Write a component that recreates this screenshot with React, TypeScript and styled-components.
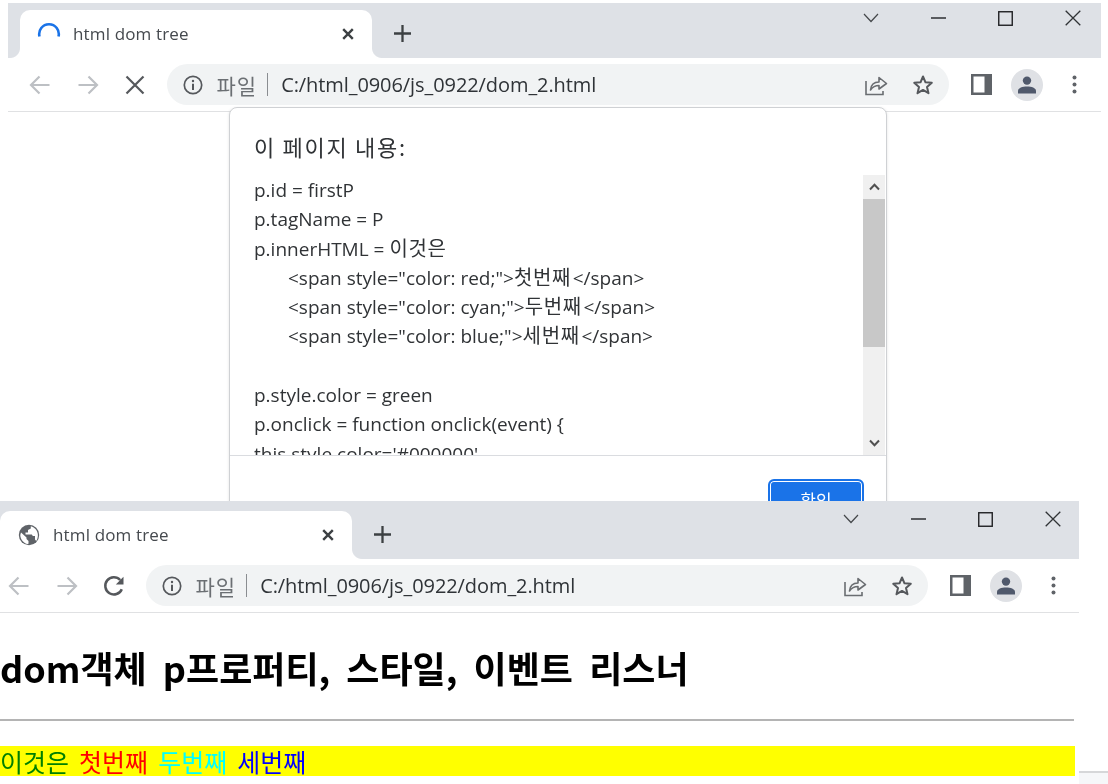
import React from 'react';
import styled, { createGlobalStyle } from 'styled-components';

const UI_FONT = `"Open Sans", "Noto Sans CJK KR", sans-serif`;
const STRIP = '#dee1e6';

const GlobalStyle = createGlobalStyle`
    html, body {
        margin: 0;
        padding: 0;
        background: #fff;
    }
    #root {
        width: 1108px;
        height: 784px;
        overflow: hidden;
    }
`;

const Desktop = styled.div`
    position: relative;
    width: 1108px;
    height: 784px;
    background: #fff;
    overflow: hidden;
    filter: blur(0.35px);
`;

/* the two browser windows are stacked on a free canvas */
const Window = styled.div<{ $left: number; $top: number; $width: number; $height: number }>`
    position: absolute;
    left: ${p => p.$left}px;
    top: ${p => p.$top}px;
    width: ${p => p.$width}px;
    height: ${p => p.$height}px;
    display: flex;
    flex-direction: column;
    background: #fff;
    font-family: ${UI_FONT};
`;

/* corner of a third window peeking out under the second one */
const PeekingWindow = styled.div`
    position: absolute;
    left: 1079px;
    top: 771px;
    width: 29px;
    height: 13px;
    box-sizing: border-box;
    border-top: 2px solid #d6d7d9;
    background: #f6f7f9;
`;

const TabStrip = styled.div<{ $height: number; $tabLeft: number }>`
    height: ${p => p.$height}px;
    flex: none;
    box-sizing: border-box;
    background: ${STRIP};
    display: flex;
    align-items: flex-end;
    padding-left: ${p => p.$tabLeft}px;
`;

const Tab = styled.div`
    position: relative;
    width: 352px;
    height: 48px;
    flex: none;
    box-sizing: border-box;
    background: #fff;
    border-radius: 10px 10px 0 0;
    display: flex;
    align-items: center;
    padding: 0 17px 1px 17px;
    color: #45494e;
    font-size: 17px;

    &::before,
    &::after {
        content: '';
        position: absolute;
        bottom: 0;
        width: 10px;
        height: 10px;
    }
    &::before {
        right: 100%;
        background: radial-gradient(circle at 0 0, ${STRIP} 9.5px, #fff 10.5px);
    }
    &::after {
        left: 100%;
        background: radial-gradient(circle at 100% 0, ${STRIP} 9.5px, #fff 10.5px);
    }
`;

const TabTitle = styled.span`
    flex: 1;
    margin-left: 12px;
    letter-spacing: 0.15px;
`;

const NewTab = styled.div`
    margin: 0 0 5px 22px;
    height: 40px;
    display: flex;
    align-items: center;
`;

const Caption = styled.div<{ $height: number; $right: number }>`
    margin-left: auto;
    align-self: flex-start;
    display: flex;
    align-items: center;
    height: ${p => p.$height}px;
    gap: 52px;
    padding-right: ${p => p.$right}px;
`;

const Toolbar = styled.div<{ $inset: number }>`
    height: 54px;
    flex: none;
    box-sizing: border-box;
    border-bottom: 1px solid #e0e1e3;
    display: flex;
    align-items: center;
    padding-left: ${p => p.$inset}px;
`;

const NavIcons = styled.div`
    display: flex;
    align-items: center;
    gap: 23.5px;
`;

const Omnibox = styled.div`
    margin-left: 19.5px;
    width: 782px;
    height: 41px;
    flex: none;
    box-sizing: border-box;
    border-radius: 21px;
    background: #f1f3f4;
    display: flex;
    align-items: center;
    padding: 0 15px 0 16px;
    font-size: 20px;
    color: #5f6368;
`;

const Scheme = styled.span`
    margin-left: 14px;
    font-size: 21px;
    letter-spacing: 1px;
    font-family: "Noto Sans CJK KR", sans-serif;
    color: #6b6f73;
`;

const Divider = styled.span`
    width: 1px;
    height: 23px;
    background: #8a8d91;
    margin: 0 13px 0 10px;
`;

const Url = styled.span`
    flex: 1;
    color: #2f3337;
    letter-spacing: -0.08px;
`;

const OmniActions = styled.div`
    display: flex;
    align-items: center;
    gap: 24px;
`;

const ToolActions = styled.div`
    margin-left: 22px;
    display: flex;
    align-items: center;
    gap: 19px;
`;

const Avatar = styled.div`
    width: 32px;
    height: 32px;
    margin-right: 10px;
    border-radius: 50%;
    background: #dfe1e5;
    display: flex;
    align-items: center;
    justify-content: center;
`;

const Page = styled.div`
    flex: 1;
    min-height: 0;
    overflow: hidden;
`;

const Heading = styled.h1`
    margin: 28px 0 0;
    font-family: "Noto Sans CJK KR", sans-serif;
    font-size: 36px;
    word-spacing: 8px;
    line-height: 52px;
    font-weight: 700;
    color: #000;
    white-space: nowrap;
`;

const Rule = styled.hr`
    margin: 26px 0 0;
    border: none;
    height: 2px;
    background: #b4b4b4;
    width: 1074px;
`;

const Para = styled.p`
    margin: 25px 0 0;
    width: 1075px;
    height: 30px;
    background: #ff0;
    color: green;
    font-family: "Noto Sans CJK KR", sans-serif;
    font-size: 25px;
    word-spacing: 4.5px;
    line-height: 30px;
    white-space: nowrap;
`;

const Span = styled.span<{ $color: string }>`
    color: ${p => p.$color};
`;

/* alert dialog floating over the first window */
const Dialog = styled.div`
    position: absolute;
    left: 229px;
    top: 107px;
    width: 658px;
    height: 410px;
    box-sizing: border-box;
    border: 1px solid #cfd1d4;
    border-radius: 8px;
    background: #fff;
    box-shadow: 0 1px 3px rgba(60, 64, 67, 0.15);
    display: flex;
    flex-direction: column;
    font-family: ${UI_FONT};
`;

const DialogTitle = styled.div`
    height: 67px;
    flex: none;
    box-sizing: border-box;
    padding: 23px 0 0 24px;
    font-family: "Noto Sans CJK KR", sans-serif;
    font-size: 22px;
    letter-spacing: 1.7px;
    line-height: 30px;
    color: #303336;
`;

const DialogBody = styled.div`
    height: 280px;
    flex: none;
    display: flex;
    border-bottom: 1px solid #dadce0;
`;

const Message = styled.div`
    flex: 1;
    min-width: 0;
    overflow: hidden;
    padding: 1px 0 0 24px;
    font-size: 19px;
    line-height: 29.3px;
    color: #303336;
`;

const Line = styled.div<{ $indent?: boolean }>`
    height: 29.3px;
    white-space: pre;
    padding-left: ${p => (p.$indent ? 34 : 0)}px;
`;

const Hangul = styled.span`
    font-family: "Noto Sans CJK KR", sans-serif;
    font-size: 20px;
    line-height: 1;
    letter-spacing: 0.7px;
    padding-right: 1.5px;
`;

const ScrollBar = styled.div`
    width: 22px;
    margin-right: 1px;
    flex: none;
    background: #f0f0f0;
    display: flex;
    flex-direction: column;
    align-items: center;
`;

const ScrollButton = styled.div`
    height: 24px;
    width: 100%;
    flex: none;
    display: flex;
    align-items: center;
    justify-content: center;
`;

const ScrollThumb = styled.div`
    width: 100%;
    height: 148px;
    flex: none;
    background: #c8c8c8;
`;

const ScrollGap = styled.div`
    flex: 1;
`;

const DialogFooter = styled.div`
    flex: 1;
    display: flex;
    justify-content: flex-end;
    align-items: flex-start;
    padding: 23px 22px 0 0;
`;

const OkButton = styled.div`
    width: 96px;
    height: 40px;
    box-sizing: border-box;
    border: 2px solid #1a73e8;
    box-shadow: inset 0 0 0 1px #fff;
    border-radius: 6px;
    background: #1a73e8;
    color: #fff;
    display: flex;
    justify-content: center;
    align-items: center;
    font-family: "Noto Sans CJK KR", sans-serif;
    font-size: 17px;
`;

const Spinner = () => (
    <svg width="24" height="24" viewBox="0 0 24 24" fill="none">
        <path d="M2.5 14.5 A9.8 9.8 0 1 1 21.5 14.5" stroke="#1a73e8" strokeWidth="2.6" strokeLinecap="butt" />
    </svg>
);

const Globe = () => (
    <svg width="24" height="24" viewBox="0 0 24 24">
        <circle cx="12" cy="12" r="10.2" fill="#5f6368" />
        <path
            d="M4 9.5 L9.5 14.5 V16 L11.5 18 V20.7 L10.5 21 C7 20.4 3.3 16.6 3.3 12 Z M13.8 3.2 V5.5 L11 7 V9.5 H8.5 V11.5 H14.8 L15.8 13 H18 V16.5 L19.2 18 C20.4 16.4 20.9 14.2 20.9 12 C20.9 8 18 4.2 13.8 3.2 Z"
            fill="#fff"
        />
    </svg>
);

const TabClose = () => (
    <svg width="14" height="14" viewBox="0 0 14 14">
        <path d="M2.2 2.2 L11.8 11.8 M11.8 2.2 L2.2 11.8" stroke="#3c4043" strokeWidth="2.4" />
    </svg>
);

const Plus = () => (
    <svg width="17" height="17" viewBox="0 0 17 17">
        <path d="M8.5 0 V17 M0 8.5 H17" stroke="#3c4043" strokeWidth="2.3" />
    </svg>
);

const Chevron = () => (
    <svg width="16" height="10" viewBox="0 0 16 10" fill="none">
        <path d="M1 1 L8 8.5 L15 1" stroke="#44474a" strokeWidth="1.2" />
    </svg>
);

const Minimize = () => (
    <svg width="15" height="4" viewBox="0 0 15 4">
        <path d="M0 2 H15" stroke="#202124" strokeWidth="1.4" />
    </svg>
);

const Maximize = () => (
    <svg width="15" height="15" viewBox="0 0 15 15" fill="none">
        <rect x="0.75" y="0.75" width="13.5" height="13.5" stroke="#202124" strokeWidth="1.4" />
    </svg>
);

const CloseWin = () => (
    <svg width="16" height="16" viewBox="0 0 16 16">
        <path d="M0.7 0.7 L15.3 15.3 M15.3 0.7 L0.7 15.3" stroke="#303336" strokeWidth="1.3" />
    </svg>
);

const Back = () => (
    <svg width="24" height="24" viewBox="0 0 24 24" fill="none">
        <path d="M21.5 12 H3.5 M11.5 3.5 L3 12 L11.5 20.5" stroke="#bdc0c4" strokeWidth="2.2" />
    </svg>
);

const Forward = () => (
    <svg width="24" height="24" viewBox="0 0 24 24" fill="none">
        <path d="M2.5 12 H20.5 M12.5 3.5 L21 12 L12.5 20.5" stroke="#bdc0c4" strokeWidth="2.2" />
    </svg>
);

const StopIcon = () => (
    <svg width="24" height="24" viewBox="0 0 24 24">
        <path d="M3.5 3.5 L20.5 20.5 M20.5 3.5 L3.5 20.5" stroke="#55585c" strokeWidth="2.2" />
    </svg>
);

const Reload = () => (
    <svg width="24" height="24" viewBox="0 0 24 24" fill="none">
        <path d="M19.8 15.2 A8.6 8.6 0 1 1 18.2 6" stroke="#55585c" strokeWidth="2.5" />
        <path d="M21.5 2.8 V10.5 H13.8 Z" fill="#55585c" />
    </svg>
);

const Info = () => (
    <svg width="20" height="20" viewBox="0 0 20 20" fill="none">
        <circle cx="10" cy="10" r="8.7" stroke="#55585c" strokeWidth="1.7" />
        <path d="M10 8.8 V15" stroke="#55585c" strokeWidth="2" />
        <circle cx="10" cy="6" r="1.2" fill="#55585c" />
    </svg>
);

const Share = () => (
    <svg width="24" height="24" viewBox="0 0 24 24" fill="none" stroke="#6a6d71" strokeWidth="1.6">
        <path d="M2 8 V21.5 H19 V18" />
        <path d="M6.5 17 C7 11.5 10 9 15 9 V4.5 L22.5 10.5 L15 16 V12.5 C11.5 12.5 8.5 14 6.5 17 Z" strokeLinejoin="round" />
    </svg>
);

const Star = () => (
    <svg width="22" height="22" viewBox="0 0 22 22" fill="none">
        <path
            d="M11 2.5 L13.5 8.3 L19.8 8.8 L15 13 L16.5 19.2 L11 15.9 L5.5 19.2 L7 13 L2.2 8.8 L8.5 8.3 Z"
            stroke="#55585c"
            strokeWidth="2"
            strokeLinejoin="round"
        />
    </svg>
);

const SidePanel = () => (
    <svg width="21" height="21" viewBox="0 0 21 21">
        <rect width="21" height="21" fill="#5f6368" />
        <rect x="2.5" y="2.5" width="11" height="16" fill="#fff" />
    </svg>
);

const Person = () => (
    <svg width="20" height="20" viewBox="0 0 20 20">
        <circle cx="10" cy="5.6" r="4.2" fill="#50596c" />
        <path d="M1 18.5 V16 C1 13 5.5 11.6 10 11.6 C14.5 11.6 19 13 19 16 V18.5 Z" fill="#50596c" />
    </svg>
);

const Dots = () => (
    <svg width="5" height="19" viewBox="0 0 5 19">
        <circle cx="2.5" cy="2.5" r="2" fill="#5f6368" />
        <circle cx="2.5" cy="9.5" r="2" fill="#5f6368" />
        <circle cx="2.5" cy="16.5" r="2" fill="#5f6368" />
    </svg>
);

const ScrollArrow = ({ up }: { up?: boolean }) => (
    <svg width="11" height="8" viewBox="0 0 11 8" fill="none">
        <path d={up ? 'M1 6.5 L5.5 1.8 L10 6.5' : 'M1 1.5 L5.5 6.2 L10 1.5'} stroke="#505050" strokeWidth="2" />
    </svg>
);

const TabRow = ({ loading, captionHeight, captionRight }: { loading?: boolean; captionHeight: number; captionRight: number }) => (
    <>
        <Tab>
            {loading ? <Spinner /> : <Globe />}
            <TabTitle>html dom tree</TabTitle>
            <TabClose />
        </Tab>
        <NewTab>
            <Plus />
        </NewTab>
        <Caption $height={captionHeight} $right={captionRight}>
            <Chevron />
            <Minimize />
            <Maximize />
            <CloseWin />
        </Caption>
    </>
);

const AddressBar = ({ loading, inset }: { loading?: boolean; inset: number }) => (
    <Toolbar $inset={inset}>
        <NavIcons>
            <Back />
            <Forward />
            {loading ? <StopIcon /> : <Reload />}
        </NavIcons>
        <Omnibox>
            <Info />
            <Scheme>파일</Scheme>
            <Divider />
            <Url>C:/html_0906/js_0922/dom_2.html</Url>
            <OmniActions>
                <Share />
                <Star />
            </OmniActions>
        </Omnibox>
        <ToolActions>
            <SidePanel />
            <Avatar>
                <Person />
            </Avatar>
            <Dots />
        </ToolActions>
    </Toolbar>
);

export default function App() {
    return (
        <Desktop>
            <GlobalStyle />
            <Window $left={8} $top={3} $width={1093} $height={300}>
                <TabStrip $height={55} $tabLeft={12}>
                    <TabRow loading captionHeight={30} captionRight={20} />
                </TabStrip>
                <AddressBar loading inset={20} />
            </Window>

            <Dialog>
                <DialogTitle>이 페이지 내용:</DialogTitle>
                <DialogBody>
                    <Message>
                        <Line>p.id = firstP</Line>
                        <Line>p.tagName = P</Line>
                        <Line>
                            p.innerHTML = <Hangul>이것은</Hangul>
                        </Line>
                        <Line $indent>
                            {'<span style="color: red;">'}
                            <Hangul>첫번째</Hangul>
                            {'</span>'}
                        </Line>
                        <Line $indent>
                            {'<span style="color: cyan;">'}
                            <Hangul>두번째</Hangul>
                            {'</span>'}
                        </Line>
                        <Line $indent>
                            {'<span style="color: blue;">'}
                            <Hangul>세번째</Hangul>
                            {'</span>'}
                        </Line>
                        <Line />
                        <Line>p.style.color = green</Line>
                        <Line>{'p.onclick = function onclick(event) {'}</Line>
                        <Line>{"this.style.color='#000000'"}</Line>
                    </Message>
                    <ScrollBar>
                        <ScrollButton>
                            <ScrollArrow up />
                        </ScrollButton>
                        <ScrollThumb />
                        <ScrollGap />
                        <ScrollButton>
                            <ScrollArrow />
                        </ScrollButton>
                    </ScrollBar>
                </DialogBody>
                <DialogFooter>
                    <OkButton>확인</OkButton>
                </DialogFooter>
            </Dialog>

            <PeekingWindow />

            <Window $left={0} $top={501} $width={1079} $height={283}>
                <TabStrip $height={58} $tabLeft={0}>
                    <TabRow captionHeight={36} captionRight={18} />
                </TabStrip>
                <AddressBar inset={7} />
                <Page>
                    <Heading>dom객체 p프로퍼티, 스타일, 이벤트 리스너</Heading>
                    <Rule />
                    <Para>
                        이것은 <Span $color="red">첫번째</Span> <Span $color="cyan">두번째</Span>{' '}
                        <Span $color="blue">세번째</Span>
                    </Para>
                </Page>
            </Window>
        </Desktop>
    );
}
